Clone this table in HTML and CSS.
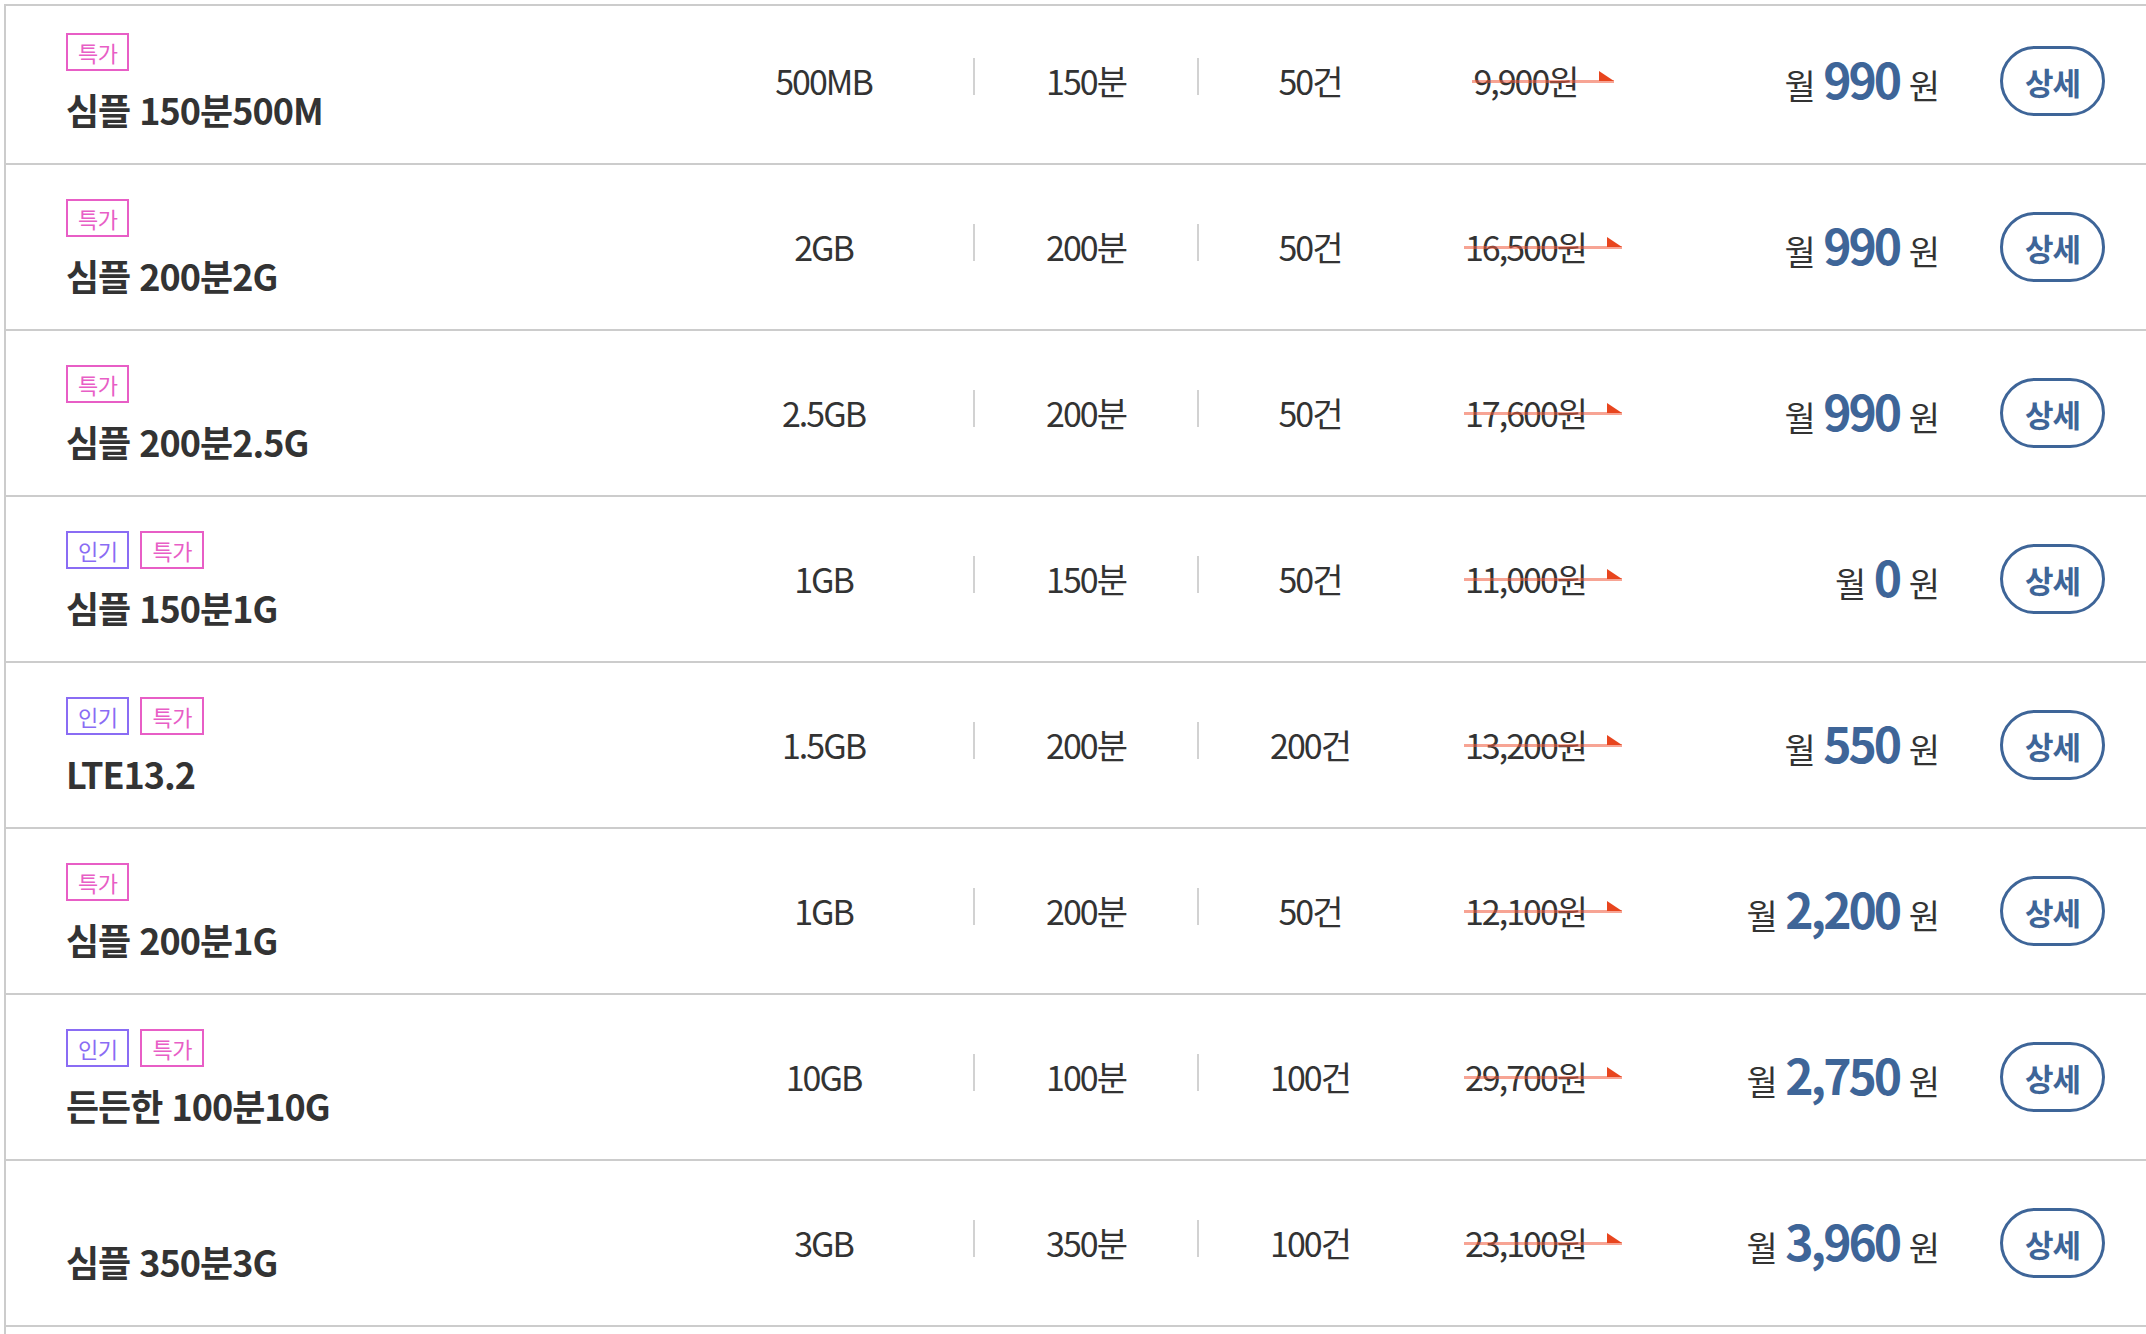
FILE: index.html
```html
<!DOCTYPE html>
<html lang="ko">
<head>
<meta charset="utf-8">
<title>요금제 목록</title>
<link rel="stylesheet" href="styles.css">
</head>
<body>
<div class="list">
  <div class="row first">
    <div class="plan"><div class="tags"><span class="tag sale">특가</span></div><div class="name">심플 150분500M</div></div>
    <div class="cell data">500MB</div><div class="sep"></div>
    <div class="cell voice">150분</div><div class="sep"></div>
    <div class="cell sms">50건</div>
    <div class="old"><span class="strike">9,900원</span></div>
    <div class="price">월 <b>990</b> 원</div>
    <a class="btn">상세</a>
  </div>
  <div class="row">
    <div class="plan"><div class="tags"><span class="tag sale">특가</span></div><div class="name">심플 200분2G</div></div>
    <div class="cell data">2GB</div><div class="sep"></div>
    <div class="cell voice">200분</div><div class="sep"></div>
    <div class="cell sms">50건</div>
    <div class="old"><span class="strike">16,500원</span></div>
    <div class="price">월 <b>990</b> 원</div>
    <a class="btn">상세</a>
  </div>
  <div class="row">
    <div class="plan"><div class="tags"><span class="tag sale">특가</span></div><div class="name">심플 200분2.5G</div></div>
    <div class="cell data">2.5GB</div><div class="sep"></div>
    <div class="cell voice">200분</div><div class="sep"></div>
    <div class="cell sms">50건</div>
    <div class="old"><span class="strike">17,600원</span></div>
    <div class="price">월 <b>990</b> 원</div>
    <a class="btn">상세</a>
  </div>
  <div class="row">
    <div class="plan"><div class="tags"><span class="tag hot">인기</span><span class="tag sale">특가</span></div><div class="name">심플 150분1G</div></div>
    <div class="cell data">1GB</div><div class="sep"></div>
    <div class="cell voice">150분</div><div class="sep"></div>
    <div class="cell sms">50건</div>
    <div class="old"><span class="strike">11,000원</span></div>
    <div class="price">월 <b>0</b> 원</div>
    <a class="btn">상세</a>
  </div>
  <div class="row">
    <div class="plan"><div class="tags"><span class="tag hot">인기</span><span class="tag sale">특가</span></div><div class="name">LTE13.2</div></div>
    <div class="cell data">1.5GB</div><div class="sep"></div>
    <div class="cell voice">200분</div><div class="sep"></div>
    <div class="cell sms">200건</div>
    <div class="old"><span class="strike">13,200원</span></div>
    <div class="price">월 <b>550</b> 원</div>
    <a class="btn">상세</a>
  </div>
  <div class="row">
    <div class="plan"><div class="tags"><span class="tag sale">특가</span></div><div class="name">심플 200분1G</div></div>
    <div class="cell data">1GB</div><div class="sep"></div>
    <div class="cell voice">200분</div><div class="sep"></div>
    <div class="cell sms">50건</div>
    <div class="old"><span class="strike">12,100원</span></div>
    <div class="price">월 <b>2,200</b> 원</div>
    <a class="btn">상세</a>
  </div>
  <div class="row">
    <div class="plan"><div class="tags"><span class="tag hot">인기</span><span class="tag sale">특가</span></div><div class="name">든든한 100분10G</div></div>
    <div class="cell data">10GB</div><div class="sep"></div>
    <div class="cell voice">100분</div><div class="sep"></div>
    <div class="cell sms">100건</div>
    <div class="old"><span class="strike">29,700원</span></div>
    <div class="price">월 <b>2,750</b> 원</div>
    <a class="btn">상세</a>
  </div>
  <div class="row">
    <div class="plan"><div class="tags empty"></div><div class="name">심플 350분3G</div></div>
    <div class="cell data">3GB</div><div class="sep"></div>
    <div class="cell voice">350분</div><div class="sep"></div>
    <div class="cell sms">100건</div>
    <div class="old"><span class="strike">23,100원</span></div>
    <div class="price">월 <b>3,960</b> 원</div>
    <a class="btn">상세</a>
  </div>
</div>
</body>
</html>
```
FILE: styles.css
```css
html, body {
  margin: 0;
  padding: 0;
  background: #fff;
}
body {
  font-family: "Noto Sans CJK KR", "Noto Sans", sans-serif;
  color: #333;
}
.list {
  margin: 4px 0 0 4px;
  border-top: 2px solid #cccccc;
  border-left: 2px solid #cccccc;
  padding-bottom: 40px;
}
.row {
  display: flex;
  align-items: center;
  height: 166px;
  box-sizing: border-box;
  border-bottom: 2px solid #cccccc;
}
.row.first {
  height: 159px;
  padding-bottom: 7px;
}
.plan {
  width: 668px;
  flex: none;
  box-sizing: border-box;
  padding-left: 60px;
  display: flex;
  flex-direction: column;
  align-items: flex-start;
}
.tags {
  display: flex;
  gap: 11px;
  margin-bottom: 19px;
}
.tags.empty {
  height: 18px;
}
.tag {
  display: block;
  height: 38px;
  box-sizing: border-box;
  border: 2px solid;
  padding: 0 10px;
  font-size: 22px;
  line-height: 34px;
  letter-spacing: -0.5px;
}
.tag.sale {
  color: #e85ec6;
  border-color: #e85ec6;
}
.tag.hot {
  color: #8a6cf4;
  border-color: #8a6cf4;
}
.name {
  font-size: 36px;
  font-weight: 700;
  line-height: 39px;
  letter-spacing: -1px;
}
.cell {
  flex: none;
  text-align: center;
  font-size: 34px;
  line-height: 40px;
  letter-spacing: -2px;
}
.cell.data { width: 299px; }
.cell.voice, .cell.sms { width: 222px; }
.sep {
  flex: none;
  width: 2px;
  height: 37px;
  background: #d2d2d2;
  margin-bottom: 9px;
}
.old {
  flex: none;
  width: 245px;
  text-align: center;
  font-size: 34px;
  line-height: 40px;
  letter-spacing: -2px;
}
.strike {
  position: relative;
  display: inline-block;
  padding-right: 36px;
}
.strike::before {
  content: "";
  position: absolute;
  left: -1px;
  right: 0;
  top: 19px;
  height: 3px;
  background: rgba(240, 90, 60, 0.55);
}
.strike::after {
  content: "";
  position: absolute;
  right: 0;
  top: 10px;
  width: 0;
  height: 0;
  border-style: solid;
  border-width: 10px 0 0 15px;
  border-color: transparent transparent transparent #e8451e;
}
.price {
  flex: none;
  width: 272px;
  text-align: right;
  font-size: 34px;
  line-height: 50px;
  letter-spacing: -2px;
  word-spacing: 2px;
}
.price b {
  font-size: 48px;
  font-weight: 700;
  color: #3e6598;
  letter-spacing: -3px;
}
.btn {
  flex: none;
  margin-left: 62px;
  width: 105px;
  height: 70px;
  box-sizing: border-box;
  border: 3px solid #3e6598;
  border-radius: 35px;
  display: flex;
  align-items: center;
  justify-content: center;
  color: #3e6598;
  font-size: 31px;
  font-weight: 700;
  letter-spacing: -1px;
}
```
